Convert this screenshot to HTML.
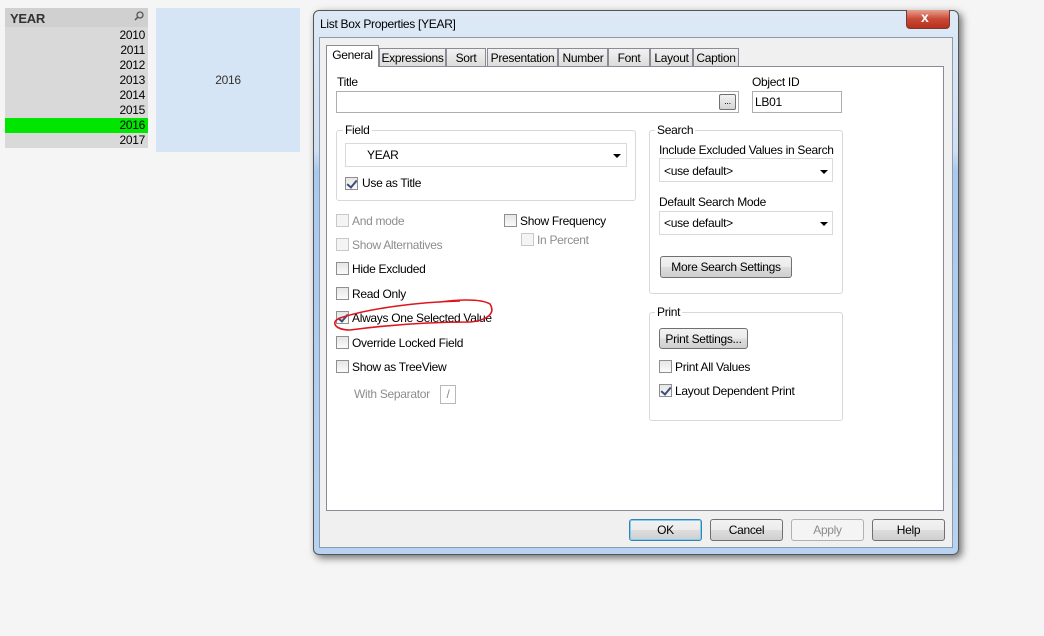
<!DOCTYPE html>
<html><head><meta charset="utf-8"><style>
*{box-sizing:border-box;margin:0;padding:0}
body{width:1044px;height:636px;background:#f5f5f5;position:relative;overflow:hidden;font-family:"Liberation Sans",sans-serif;font-size:12px;color:#000;letter-spacing:-0.3px}
.a{position:absolute;white-space:nowrap}
.cb{position:absolute;width:13px;height:13px;border:1px solid #8f8f8f;background:linear-gradient(#e6e6e6,#fafafa)}
.cb.d{border-color:#c8c8c8;background:#f4f4f4}
.cb.c::after{content:"";position:absolute;left:3px;top:0px;width:4px;height:8px;border:solid #3b4f7a;border-width:0 2px 2px 0;transform:rotate(40deg)}
.lbl{position:absolute;white-space:nowrap;line-height:16px}
.g{color:#8d8d8d}
.grp{position:absolute;border:1px solid #d8d8d8;border-radius:3px}
.gt{position:absolute;background:#fff;padding:0 2px;line-height:14px}
.inp{position:absolute;border:1px solid #abadb3;background:#fff}
.btn{position:absolute;border:1px solid #707070;border-radius:3px;background:linear-gradient(#f2f2f2 0,#ebebeb 50%,#dddddd 51%,#cfcfcf 100%);text-align:center;line-height:20px}
.arr{position:absolute;width:0;height:0;border-left:4px solid transparent;border-right:4px solid transparent;border-top:4px solid #000}
.tab{position:absolute;top:48px;height:18px;border:1px solid #898c95;border-bottom:none;background:linear-gradient(#f2f2f2,#dcdcdc);text-align:center;line-height:18px}
</style></head><body>
<div class="a" style="left:5px;top:8px;width:143px;height:140px;background:#d9d9d9"></div>
<div class="a" style="left:5px;top:8px;width:143px;height:19px;background:#d0d0d0"></div>
<div class="a" style="left:10px;top:11px;font-weight:bold;font-size:13px;color:#333">YEAR</div>
<svg class="a" style="left:134px;top:11px" width="10" height="10"><circle cx="6" cy="4" r="3" fill="none" stroke="#555" stroke-width="1.3"/><line x1="4" y1="6" x2="1" y2="9" stroke="#555" stroke-width="1.5"/></svg>
<div class="a" style="left:5px;top:118px;width:143px;height:15px;background:#00e600"></div>
<div class="a" style="left:100px;top:28px;width:45px;text-align:right;line-height:15px;font-size:12px">2010<br>2011<br>2012<br>2013<br>2014<br>2015<br>2016<br>2017</div>
<div class="a" style="left:156px;top:8px;width:144px;height:144px;background:#d6e5f5"></div>
<div class="a" style="left:156px;top:73px;width:144px;text-align:center;color:#333">2016</div>
<div class="a" style="left:313px;top:10px;width:646px;height:545px;border:1px solid #555;border-radius:6px;background:linear-gradient(#dde9f6 0,#cfe0f3 140px,#a9c9ef 160px,#b8d3f1 100%);box-shadow:3px 3px 8px rgba(0,0,0,.55)"></div>
<div class="a" style="left:320px;top:17px;font-size:12px">List Box Properties [YEAR]</div>
<div class="a" style="left:906px;top:10px;width:44px;height:19px;border:1px solid #7a3a30;border-top:none;border-radius:0 0 4px 4px;background:linear-gradient(#e8a090,#c84a36 50%,#b8301e)"></div>
<div class="a" style="left:921px;top:9px;color:#fff;font-weight:bold;font-size:14px">x</div>
<div class="a" style="left:319px;top:37px;width:634px;height:511px;background:#f0f0f0;border:1px solid #8e9aaa"></div>
<div class="tab" style="left:379px;width:67px">Expressions</div>
<div class="tab" style="left:446px;width:40px">Sort</div>
<div class="tab" style="left:487px;width:71px">Presentation</div>
<div class="tab" style="left:558px;width:50px">Number</div>
<div class="tab" style="left:608px;width:42px">Font</div>
<div class="tab" style="left:650px;width:43px">Layout</div>
<div class="tab" style="left:693px;width:46px">Caption</div>
<div class="a" style="left:326px;top:66px;width:618px;height:445px;background:#fff;border:1px solid #898c95"></div>
<div class="tab" style="left:326px;top:45px;width:53px;height:22px;background:#fff;border-color:#898c95">General</div>
<div class="lbl" style="left:337px;top:74px">Title</div>
<div class="inp" style="left:336px;top:91px;width:403px;height:22px"></div>
<div class="a" style="left:719px;top:94px;width:17px;height:16px;border:1px solid #707070;border-radius:2px;background:linear-gradient(#f2f2f2,#d4d4d4);font-size:9px;text-align:center;line-height:12px">...</div>
<div class="lbl" style="left:752px;top:74px">Object ID</div>
<div class="inp" style="left:752px;top:91px;width:90px;height:22px"></div>
<div class="lbl" style="left:755px;top:94px">LB01</div>
<div class="grp" style="left:336px;top:130px;width:300px;height:71px"></div>
<div class="gt" style="left:343px;top:123px">Field</div>
<div class="inp" style="left:345px;top:143px;width:282px;height:24px;border-color:#dadada"></div>
<div class="lbl" style="left:367px;top:147px">YEAR</div>
<div class="arr" style="left:613px;top:154px"></div>
<div class="cb c" style="left:345px;top:177px"></div><div class="lbl" style="left:362px;top:175px">Use as Title</div>
<div class="cb d" style="left:336px;top:214px"></div><div class="lbl g" style="left:352px;top:213px">And mode</div>
<div class="cb d" style="left:336px;top:238px"></div><div class="lbl g" style="left:352px;top:237px">Show Alternatives</div>
<div class="cb" style="left:336px;top:262px"></div><div class="lbl" style="left:352px;top:261px">Hide Excluded</div>
<div class="cb" style="left:336px;top:287px"></div><div class="lbl" style="left:352px;top:286px">Read Only</div>
<div class="cb c" style="left:336px;top:311px"></div><div class="lbl" style="left:352px;top:310px">Always One Selected Value</div>
<div class="cb" style="left:336px;top:336px"></div><div class="lbl" style="left:352px;top:335px">Override Locked Field</div>
<div class="cb" style="left:336px;top:360px"></div><div class="lbl" style="left:352px;top:359px">Show as TreeView</div>
<div class="lbl g" style="left:354px;top:386px">With Separator</div>
<div class="inp" style="left:440px;top:385px;width:16px;height:19px;border-color:#b8b8b8;color:#888;text-align:center;line-height:17px">/</div>
<div class="cb" style="left:504px;top:214px"></div><div class="lbl" style="left:520px;top:213px">Show Frequency</div>
<div class="cb d" style="left:521px;top:233px"></div><div class="lbl g" style="left:537px;top:232px">In Percent</div>
<div class="grp" style="left:649px;top:130px;width:194px;height:164px"></div>
<div class="gt" style="left:655px;top:123px">Search</div>
<div class="lbl" style="left:659px;top:142px">Include Excluded Values in Search</div>
<div class="inp" style="left:659px;top:158px;width:174px;height:24px;border-color:#dadada"></div>
<div class="lbl" style="left:664px;top:163px">&lt;use default&gt;</div>
<div class="arr" style="left:820px;top:170px"></div>
<div class="lbl" style="left:659px;top:194px">Default Search Mode</div>
<div class="inp" style="left:659px;top:211px;width:174px;height:24px;border-color:#dadada"></div>
<div class="lbl" style="left:664px;top:215px">&lt;use default&gt;</div>
<div class="arr" style="left:820px;top:222px"></div>
<div class="btn" style="left:660px;top:256px;width:132px;height:22px">More Search Settings</div>
<div class="grp" style="left:649px;top:312px;width:194px;height:109px"></div>
<div class="gt" style="left:655px;top:305px">Print</div>
<div class="btn" style="left:659px;top:328px;width:89px;height:21px">Print Settings...</div>
<div class="cb" style="left:659px;top:360px"></div><div class="lbl" style="left:675px;top:359px">Print All Values</div>
<div class="cb c" style="left:659px;top:384px"></div><div class="lbl" style="left:675px;top:383px">Layout Dependent Print</div>
<div class="btn" style="left:629px;top:519px;width:73px;height:22px;border-color:#3c7fb1;box-shadow:inset 0 0 0 1px #7fd0f0">OK</div>
<div class="btn" style="left:710px;top:519px;width:73px;height:22px">Cancel</div>
<div class="btn" style="left:791px;top:519px;width:73px;height:22px;border-color:#adb2b5;background:#f4f4f4;color:#8d8d8d">Apply</div>
<div class="btn" style="left:872px;top:519px;width:73px;height:22px">Help</div>
<svg class="a" style="left:0;top:0" width="1044" height="636"><path d="M460 301 C 420 302, 370 308, 340 318 C 330 322, 335 330, 350 330 C 380 326, 420 322, 470 322 C 490 320, 495 312, 490 304 C 480 298, 455 300, 440 302" fill="none" stroke="#e0141e" stroke-width="1.6"/></svg>
</body></html>
